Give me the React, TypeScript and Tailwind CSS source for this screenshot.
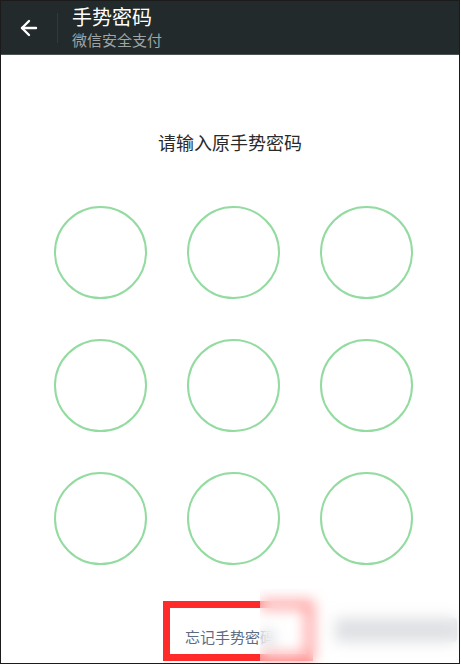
import React from 'react';
import { ArrowLeft } from 'lucide-react';

const font = { fontFamily: '"Noto Sans CJK SC", "Noto Sans", sans-serif' };

const App: React.FC = () => {
  const dots = Array.from({ length: 9 }, (_, i) => i);

  return (
    <div className="w-[461px] h-[665px] bg-white relative overflow-hidden" style={font}>
      <div className="w-[460px] h-[664px] border border-[#1b1b1b] flex flex-col">
        {/* header */}
        <div className="h-[54px] bg-[#222a2b] border-b border-[#4b5253] flex items-center shrink-0">
          <div className="w-[56px] flex justify-center">
            <ArrowLeft className="h-[24px] w-[24px] text-white" strokeWidth={2.4} />
          </div>
          <div className="w-px h-[30px] bg-[#323a3b]" />
          <div className="ml-[14px] flex flex-col">
            <span className="text-[20px] leading-[24px] text-white">手势密码</span>
            <span className="text-[15px] leading-[20px] text-[#9fa5a5] mt-[1px]">微信安全支付</span>
          </div>
        </div>

        {/* body */}
        <div className="flex flex-col items-center">
          <p className="mt-[75px] text-[18px] leading-[24px] text-[#2a2a2a]">请输入原手势密码</p>
          <div className="mt-[52px] ml-[7px] grid grid-cols-3 gap-[40px]">
            {dots.map((d) => (
              <div
                key={d}
                className="w-[93px] h-[93px] rounded-full border-2 border-[#93dba0]"
              />
            ))}
          </div>
          <p className="mt-[62px] text-[15px] leading-[20px] text-[#5d6b82]">忘记手势密码</p>
        </div>
      </div>

      {/* red annotation box */}
      <div className="absolute left-[163px] top-[601px] w-[150px] h-[60px] border-[7px] border-[#ff2b2b]" />

      {/* blurred content under mosaic */}
      <div className="absolute left-[335px] top-[618px] w-[122px] h-[24px] bg-[#c9ccd1] rounded" />

      {/* blur overlay */}
      <div className="absolute left-[260px] top-[589px] w-[199px] h-[74px] backdrop-blur-[7px] bg-white/40" />
    </div>
  );
};

export default App;
